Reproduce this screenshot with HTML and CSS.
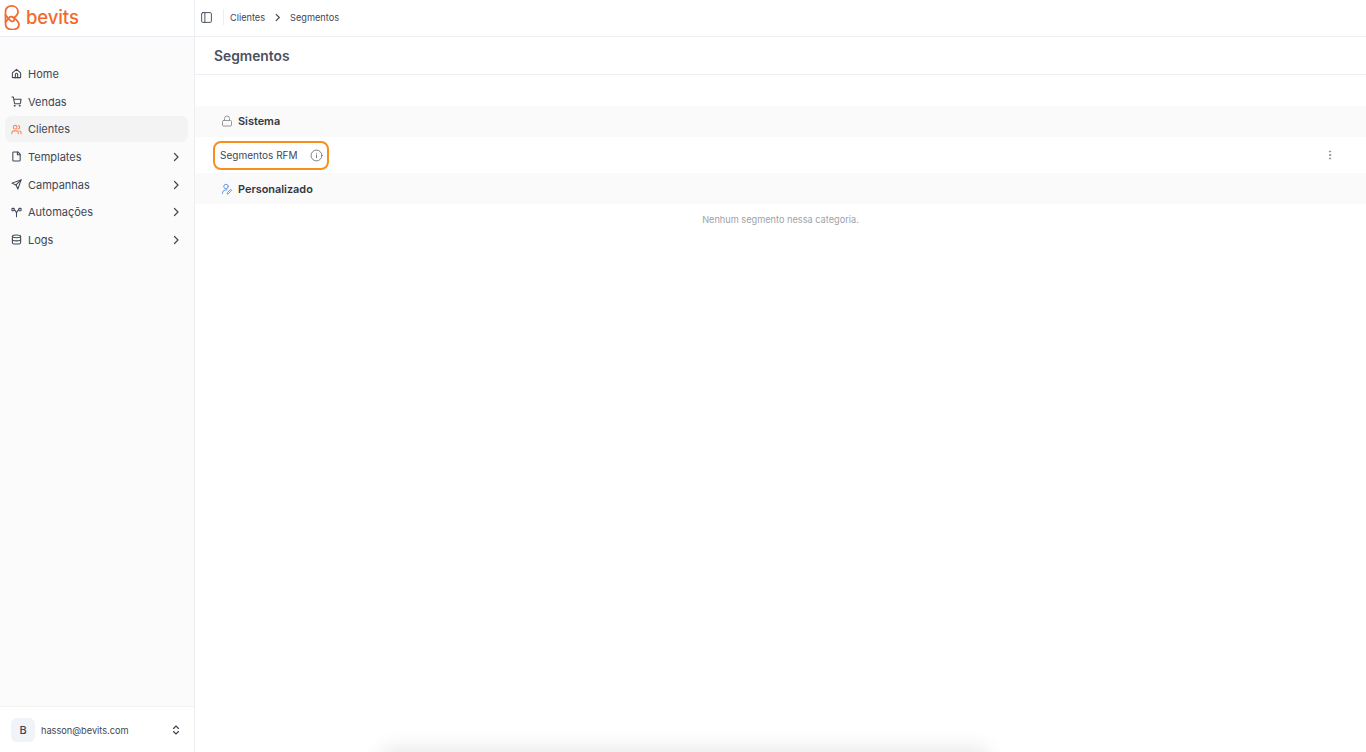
FILE: index.html
```html
<!DOCTYPE html>
<html lang="pt-BR">
<head>
  <meta charset="UTF-8" />
  <title>Bevits - Segmentos</title>
  <link rel="stylesheet" href="styles.css">
</head>
<body>
  <aside class="sidebar">
    <div class="logo">
      <svg class="logo-mark" viewBox="0 0 17 27">
        <path d="M1.500 19 V7 C1.500 3.500 4.200 1 8 1 C12 1 15 3.600 15 7.200 C15 10 13 12 10.500 14 C13.500 16 16 18 16 21 C16 24.500 12.800 26.500 8.500 26.500 C4.200 26.500 1.500 24 1.500 20"/>
        <path d="M1.500 18.500 L5.500 13.500 C7 11.500 9 12.700 10.500 14 C12 15.300 10.500 18.300 8.200 17.600 C6 17 4.500 14 1.500 11"/>
      </svg>
      <span class="logo-text">bevits</span>
    </div>
    <nav class="nav">
      <a class="nav-item">
        <svg class="icon" viewBox="0 0 24 24"><path d="M3 10.500 12 3l9 7.500V20a1 1 0 0 1-1 1H4a1 1 0 0 1-1-1z"/><path d="M9.500 21v-7a2.500 2.500 0 0 1 5 0v7"/></svg>
        <span>Home</span>
      </a>
      <a class="nav-item">
        <svg class="icon" viewBox="0 0 24 24"><circle cx="8" cy="21" r="1"/><circle cx="19" cy="21" r="1"/><path d="M2 2h3l2.600 13.400a2 2 0 0 0 2 1.600h9a2 2 0 0 0 2-1.600L22 7H6"/></svg>
        <span>Vendas</span>
      </a>
      <a class="nav-item active">
        <svg class="icon" viewBox="0 0 24 24"><path d="M16 21v-2a4 4 0 0 0-4-4H6a4 4 0 0 0-4 4v2"/><circle cx="9" cy="7" r="4"/><path d="M22 21v-2a4 4 0 0 0-3-3.870"/><path d="M16 3.130a4 4 0 0 1 0 7.750"/></svg>
        <span>Clientes</span>
      </a>
      <a class="nav-item">
        <svg class="icon" viewBox="0 0 24 24"><path d="M15 2H6a2 2 0 0 0-2 2v16a2 2 0 0 0 2 2h12a2 2 0 0 0 2-2V7z"/><path d="M14 2v6h6"/></svg>
        <span>Templates</span>
        <svg class="chevron" viewBox="0 0 24 24"><path d="m9 5 7 7-7 7"/></svg>
      </a>
      <a class="nav-item">
        <svg class="icon" viewBox="0 0 24 24"><path d="M22 2 15 22l-4-9-9-4z"/><path d="M22 2 11 13"/></svg>
        <span>Campanhas</span>
        <svg class="chevron" viewBox="0 0 24 24"><path d="m9 5 7 7-7 7"/></svg>
      </a>
      <a class="nav-item">
        <svg class="icon" viewBox="0 0 24 24"><rect x="2" y="3" width="5" height="5" rx="1"/><rect x="17" y="3" width="5" height="5" rx="1"/><path d="M7 6c3 1 4 4 5 7 1-3 2-6 5-7"/><path d="M12 13v8"/></svg>
        <span>Automações</span>
        <svg class="chevron" viewBox="0 0 24 24"><path d="m9 5 7 7-7 7"/></svg>
      </a>
      <a class="nav-item">
        <svg class="icon" viewBox="0 0 24 24"><ellipse cx="12" cy="5" rx="9" ry="3"/><path d="M3 5v14c0 1.700 4 3 9 3s9-1.300 9-3V5"/><path d="M3 12c0 1.700 4 3 9 3s9-1.300 9-3"/></svg>
        <span>Logs</span>
        <svg class="chevron" viewBox="0 0 24 24"><path d="m9 5 7 7-7 7"/></svg>
      </a>
    </nav>
    <div class="account">
      <div class="avatar">B</div>
      <span class="account-email">hasson@bevits.com</span>
      <svg class="updown" viewBox="0 0 24 24"><path d="m7 9 5-5 5 5"/><path d="m7 15 5 5 5-5"/></svg>
    </div>
  </aside>

  <main class="main">
    <header class="topbar">
      <svg class="panel-icon" viewBox="0 0 24 24"><rect x="3" y="3" width="18" height="18" rx="2"/><path d="M9 3v18"/></svg>
      <div class="topbar-sep"></div>
      <span class="crumb">Clientes</span>
      <svg class="crumb-chevron" viewBox="0 0 24 24"><path d="m9 5 7 7-7 7"/></svg>
      <span class="crumb">Segmentos</span>
    </header>
    <div class="page-title"><h1>Segmentos</h1></div>
    <section class="content">
      <div class="group-head">
        <svg class="group-icon" viewBox="0 0 24 24"><rect x="3" y="11" width="18" height="11" rx="2"/><path d="M7 11V7a5 5 0 0 1 10 0v4"/></svg>
        <span>Sistema</span>
      </div>
      <div class="segment-row">
        <div class="segment-tag">
          <span>Segmentos RFM</span>
          <svg class="info-icon" viewBox="0 0 24 24"><circle cx="12" cy="12" r="10"/><path d="M12 16v-5"/><path d="M12 8h.010"/></svg>
        </div>
        <svg class="kebab" viewBox="0 0 24 24"><circle cx="12" cy="5" r="1.300"/><circle cx="12" cy="12" r="1.300"/><circle cx="12" cy="19" r="1.300"/></svg>
      </div>
      <div class="group-head custom">
        <svg class="group-icon" viewBox="0 0 24 24"><circle cx="10" cy="7" r="4.500"/><path d="M3 21v-1a6 6 0 0 1 6-6h3"/><path d="m15 21 6.500-6.500-2-2L13 19l-.5 2.500z"/></svg>
        <span>Personalizado</span>
      </div>
      <p class="empty">Nenhum segmento nessa categoria.</p>
    </section>
  </main>

  <div class="bottom-glow"></div>
</body>
</html>
```

FILE: styles.css
```css
* {
  margin: 0;
  padding: 0;
  box-sizing: border-box;
}
html, body {
  height: 100%;
  overflow: hidden;
}
body {
  display: flex;
  font-family: 'Inter', sans-serif;
  background: white;
  color: #3f4654;
}
svg {
  fill: none;
  stroke: currentColor;
  stroke-width: 2;
  stroke-linecap: round;
  stroke-linejoin: round;
  flex-shrink: 0;
}

/* sidebar */
.sidebar {
  width: 195px;
  flex-shrink: 0;
  display: flex;
  flex-direction: column;
  background: #fbfbfb;
  border-right: 1px solid #eceef2;
}
.logo {
  height: 37px;
  display: flex;
  align-items: center;
  gap: 6px;
  padding: 0 0 2px 4px;
  background: white;
  border-bottom: 1px solid #e8ebf1;
}
.logo-mark {
  width: 16px;
  height: 25px;
  color: #f26a2e;
  stroke-width: 1.900;
}
.logo-text {
  font-size: 18.500px;
  font-weight: 500;
  letter-spacing: -0.1px;
  color: #f26a2e;
}
.nav {
  flex: 1;
  display: flex;
  flex-direction: column;
  gap: 2px;
  padding: 24px 6px 0 5px;
}
.nav-item {
  height: 25.700px;
  display: flex;
  align-items: center;
  gap: 6px;
  padding: 0 6px;
  border-radius: 7px;
  font-size: 11px;
  color: #3f4654;
}
.nav-item .icon {
  width: 11px;
  height: 11px;
  stroke-width: 2.300;
}
.nav-item.active {
  background: #f3f3f3;
}
.nav-item.active .icon {
  color: #f58a55;
}
.chevron {
  width: 12px;
  height: 12px;
  margin-left: auto;
  stroke-width: 2.400;
}
.account {
  height: 46px;
  display: flex;
  align-items: center;
  gap: 6px;
  padding: 1px 12px 0 11px;
  background: white;
  border-top: 1px solid #f3f3f3;
}
.avatar {
  width: 24px;
  height: 24px;
  display: flex;
  align-items: center;
  justify-content: center;
  border-radius: 6px;
  background: #f0f3f8;
  font-size: 11px;
  font-weight: 500;
}
.account-email {
  font-size: 9.200px;
  flex: 1;
}
.updown {
  width: 12px;
  height: 12px;
  stroke-width: 2.300;
}

/* main */
.main {
  flex: 1;
  min-width: 0;
  display: flex;
  flex-direction: column;
}
.topbar {
  height: 37px;
  display: flex;
  align-items: center;
  padding: 0 0 2px 5px;
  border-bottom: 1px solid #eceef2;
  font-size: 9.200px;
}
.panel-icon {
  width: 13px;
  height: 13px;
  stroke-width: 1.700;
}
.topbar-sep {
  width: 1px;
  height: 16px;
  margin: 0 6px 0 10px;
  background: #eceef2;
}
.crumb-chevron {
  width: 11px;
  height: 11px;
  margin: 0 7px;
  stroke-width: 2.400;
}
.page-title {
  height: 38px;
  display: flex;
  align-items: center;
  padding-left: 19px;
  border-bottom: 1px solid #eceef2;
}
h1 {
  font-size: 13.800px;
  font-weight: 600;
  color: #4a5160;
}
.content {
  padding-top: 31px;
}
.group-head {
  height: 31px;
  display: flex;
  align-items: center;
  gap: 5px;
  padding: 0 0 1px 26px;
  background: #fafafa;
  font-size: 10.900px;
  font-weight: 600;
  color: #33373f;
}
.group-icon {
  width: 12px;
  height: 12px;
  color: #8a8d94;
  stroke-width: 1.800;
}
.group-head.custom {
  padding-bottom: 0;
}
.group-head.custom .group-icon {
  color: #5b8fe0;
}
.segment-row {
  height: 36px;
  display: flex;
  align-items: center;
  justify-content: space-between;
  padding: 0 30px 0 18px;
}
.segment-tag {
  width: 116px;
  height: 29px;
  display: flex;
  align-items: center;
  justify-content: space-between;
  padding: 0 4px 0 5px;
  border: 2px solid #f78f1e;
  border-radius: 8px;
  font-size: 10px;
}
.info-icon {
  width: 13px;
  height: 13px;
  color: #6f7277;
  stroke-width: 1.700;
}
.kebab {
  width: 12px;
  height: 12px;
  color: #8e9095;
}
.empty {
  padding-top: 10px;
  font-size: 9.200px;
  text-align: center;
  color: #a0a2a7;
}

/* shadow of something cut off below the window */
.bottom-glow {
  position: fixed;
  left: 385px;
  bottom: -14px;
  width: 600px;
  height: 14px;
  box-shadow: 0 0 20px 3px rgba(0,0,0,0.1);
}
```
